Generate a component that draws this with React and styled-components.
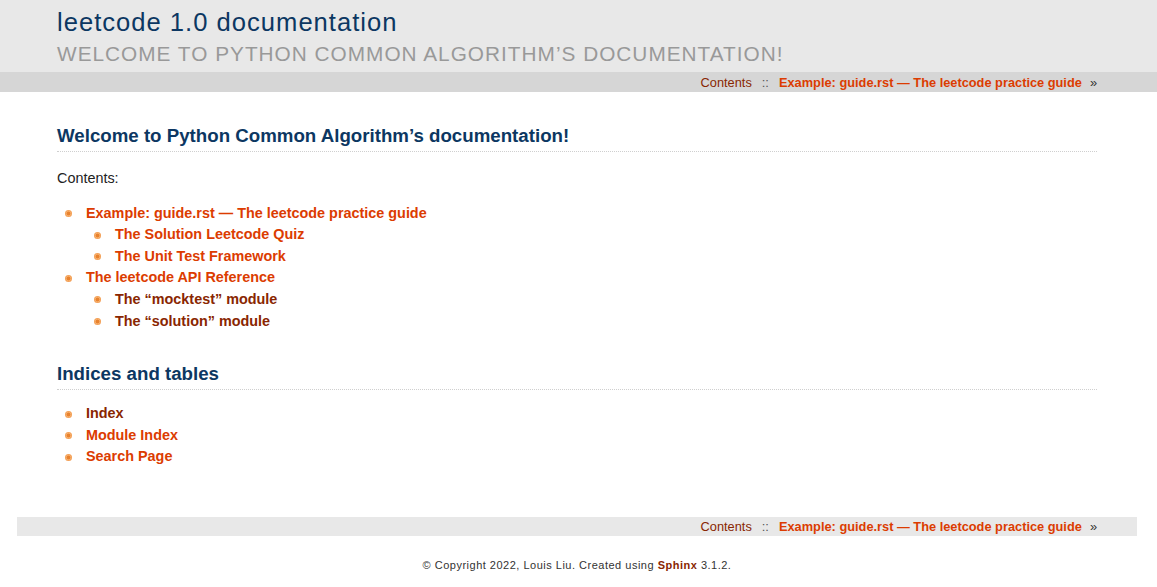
import React from "react";
import styled, { createGlobalStyle } from "styled-components";

const GlobalStyle = createGlobalStyle`
  html, body {
    margin: 0;
    padding: 0;
    background: #fff;
  }
  body {
    font-family: "Liberation Sans", Arial, Helvetica, sans-serif;
    color: #333333;
  }
`;

const HeaderBand = styled.div`
  background: #e8e8e8;
  height: 72px;
`;

const Wrap = styled.div`
  width: 1120px;
  margin-left: 17px;
  box-sizing: border-box;
  padding: 0 40px;
`;

const SiteTitle = styled.h1`
  margin: 0;
  padding-top: 7px;
  font-size: 25.6px;
  line-height: 30px;
  font-weight: normal;
  letter-spacing: 1px;
  color: #0c3762;
`;

const SiteSubtitle = styled.h2`
  margin: 0;
  padding-top: 2px;
  font-size: 20.8px;
  line-height: 30px;
  font-weight: normal;
  letter-spacing: 1px;
  text-transform: uppercase;
  color: #999;
`;

const NavBand = styled.div`
  background: ${(p) => p.$bg};
  height: ${(p) => p.$h}px;
`;

const NavText = styled.p`
  margin: 0;
  padding: 1px 40px 0 0;
  text-align: right;
  font-size: 12.8px;
  line-height: ${(p) => p.$h - 1}px;
  color: #333;
`;

const Sep = styled.span`
  padding: 0 10px;
  color: #555;
`;

const Raquo = styled.span`
  padding-left: 8px;
  color: #333;
`;

const Link = styled.a`
  color: ${(p) => (p.$visited ? "#892601" : "#dc3c01")};
  font-weight: bold;
  text-decoration: none;
`;

const PlainLink = styled.a`
  color: #892601;
  text-decoration: none;
  font-weight: normal;
`;

const Heading = styled.h2`
  margin: ${(p) => p.$top}px 0 0;
  padding-bottom: 3px;
  font-size: 18.7px;
  line-height: 24px;
  font-weight: bold;
  color: #0c3762;
  border-bottom: 1px dotted #cfcfcf;
`;

const Para = styled.p`
  margin: 16px 0 0;
  font-size: 14.4px;
  line-height: 21.6px;
  color: #222;
`;

const List = styled.ul`
  list-style: none;
  margin: ${(p) => p.$top || 0}px 0 0;
  padding: 0 0 0 29px;
`;

const Item = styled.li`
  position: relative;
  font-size: 14.4px;
  line-height: 21.6px;

  &::before {
    content: "";
    position: absolute;
    left: -21px;
    top: 7.5px;
    width: 7px;
    height: 7px;
    border-radius: 50%;
    background: radial-gradient(circle at 50% 50%, #e8822e 0 1.6px, #f6ad6a 2.2px, #f29a4c 3.5px);
  }
`;

const BottomWrap = styled.div`
  width: 1120px;
  margin: 49px 0 0 17px;
`;

const Footer = styled.div`
  width: 1120px;
  margin: 21px 0 0 17px;
  text-align: center;
  font-size: 11px;
  line-height: 16px;
  letter-spacing: 0.5px;
  color: #333;
`;

const NavLinks = ({ h }) => (
  <NavText $h={h}>
    <PlainLink href="#">Contents</PlainLink>
    <Sep>::</Sep>
    <Link href="#">Example: guide.rst — The leetcode practice guide</Link>
    <Raquo>»</Raquo>
  </NavText>
);

const App = () => (
  <>
    <GlobalStyle />
    <HeaderBand>
      <Wrap>
        <SiteTitle>leetcode 1.0 documentation</SiteTitle>
        <SiteSubtitle>Welcome to Python Common Algorithm’s documentation!</SiteSubtitle>
      </Wrap>
    </HeaderBand>
    <NavBand $bg="#d6d6d6" $h={20}>
      <Wrap style={{ paddingRight: 0 }}>
        <NavLinks h={20} />
      </Wrap>
    </NavBand>
    <Wrap>
      <Heading $top={32}>Welcome to Python Common Algorithm’s documentation!</Heading>
      <Para>Contents:</Para>
      <List $top={13}>
        <Item>
          <Link href="#">Example: guide.rst — The leetcode practice guide</Link>
          <List>
            <Item>
              <Link href="#">The Solution Leetcode Quiz</Link>
            </Item>
            <Item>
              <Link href="#">The Unit Test Framework</Link>
            </Item>
          </List>
        </Item>
        <Item>
          <Link href="#">The leetcode API Reference</Link>
          <List>
            <Item>
              <Link href="#" $visited>The “mocktest” module</Link>
            </Item>
            <Item>
              <Link href="#" $visited>The “solution” module</Link>
            </Item>
          </List>
        </Item>
      </List>
      <Heading $top={30}>Indices and tables</Heading>
      <List $top={13}>
        <Item>
          <Link href="#" $visited>Index</Link>
        </Item>
        <Item>
          <Link href="#">Module Index</Link>
        </Item>
        <Item>
          <Link href="#">Search Page</Link>
        </Item>
      </List>
    </Wrap>
    <BottomWrap>
      <NavBand $bg="#e8e8e8" $h={19}>
        <NavLinks h={19} />
      </NavBand>
    </BottomWrap>
    <Footer>
      © Copyright 2022, Louis Liu. Created using <Link href="#" $visited>Sphinx</Link> 3.1.2.
    </Footer>
  </>
);

export default App;
